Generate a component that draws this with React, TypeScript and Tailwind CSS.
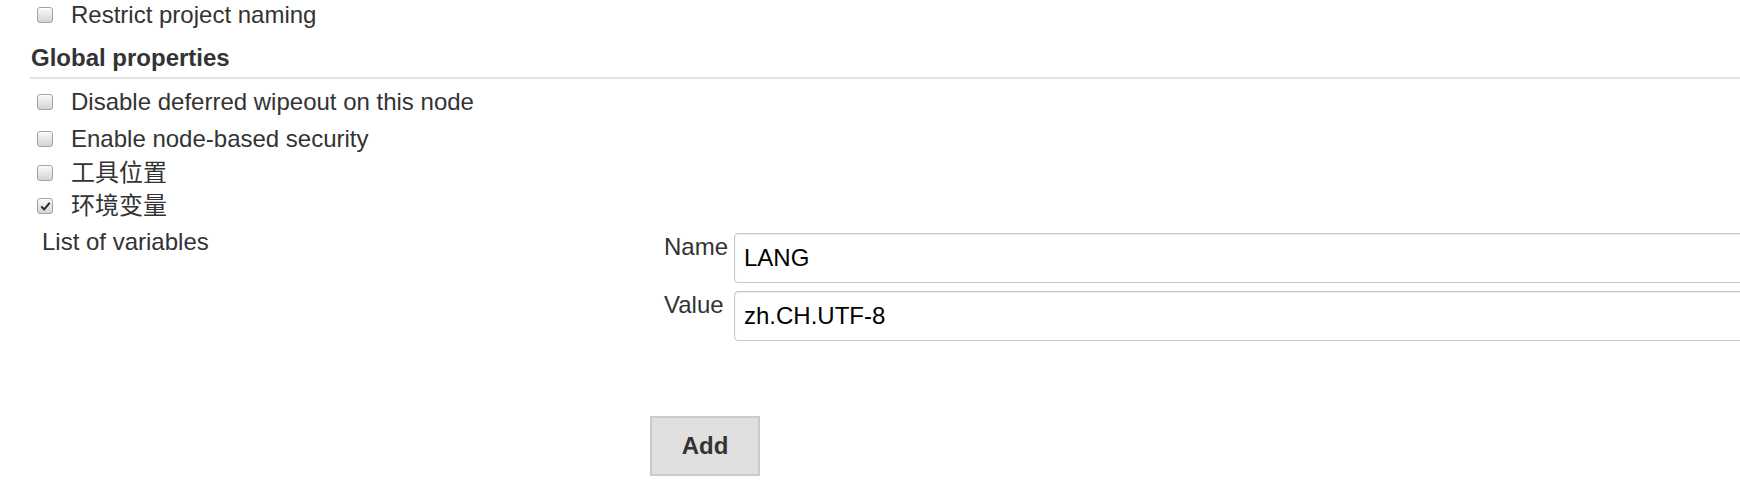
import React from "react";

const font = {
  fontFamily: '"Liberation Sans", "Noto Sans CJK SC", Arial, sans-serif',
};

function Checkbox({ checked = false }: { checked?: boolean }) {
  return (
    <span className="flex h-[16px] w-[16px] shrink-0 items-center justify-center rounded-[3px] border border-[#a4a4a4] bg-gradient-to-b from-[#fafafa] to-[#d4d4d4] shadow-[inset_0_1px_0_rgba(255,255,255,0.8)]">
      {checked && (
        <svg viewBox="0 0 12 12" className="h-[11px] w-[11px]">
          <path
            d="M2 6.5 L4.6 9.2 L10 2.6"
            fill="none"
            stroke="#2b2b2b"
            strokeWidth="2.2"
            strokeLinecap="round"
            strokeLinejoin="round"
          />
        </svg>
      )}
    </span>
  );
}

function CheckRow({
  label,
  checked,
  className = "",
}: {
  label: string;
  checked?: boolean;
  className?: string;
}) {
  return (
    <div className={`flex h-[28px] items-center gap-[18px] pl-[7px] ${className}`}>
      <Checkbox checked={checked} />
      <span className="text-[24px] leading-[28px] text-[#333333]">{label}</span>
    </div>
  );
}

function TextField({ label, value }: { label: string; value: string }) {
  return (
    <div className="flex items-start">
      <div className="w-[84px] shrink-0 pl-[14px] text-[24px] leading-[28px] text-[#333333]">
        {label}
      </div>
      <div className="flex h-[50px] w-[1100px] shrink-0 items-center rounded-[4px] border border-[#c6c6c6] bg-white pl-[9px] text-[24px] text-black shadow-[inset_0_1px_2px_rgba(0,0,0,0.08)]">
        {value}
      </div>
    </div>
  );
}

export default function App() {
  return (
    <div className="h-[500px] w-[1740px] overflow-hidden bg-white" style={font}>
      <div className="flex flex-col pl-[30px]">
        <CheckRow label="Restrict project naming" className="mt-[1px]" />

        <h3 className="mt-[15px] pl-[1px] text-[24px] font-bold leading-[28px] text-[#333333]">
          Global properties
        </h3>
        <div className="mt-[5px] h-[2px] bg-[#e2e2e2]" />

        <CheckRow label="Disable deferred wipeout on this node" className="mt-[9px]" />
        <CheckRow label="Enable node-based security" className="mt-[9px]" />
        <CheckRow label="工具位置" className="mt-[6px]" />
        <CheckRow label="环境变量" checked className="mt-[5px]" />

        <div className="mt-[8px] flex items-start pl-[12px]">
          <div className="w-[608px] shrink-0 text-[24px] leading-[28px] text-[#333333]">
            List of variables
          </div>
          <div className="mt-[5px] flex flex-col">
            <div className="flex flex-col gap-[8px]">
              <TextField label="Name" value="LANG" />
              <TextField label="Value" value="zh.CH.UTF-8" />
            </div>
            <button className="mt-[75px] h-[60px] w-[110px] border-2 border-[#cbcbcb] bg-[#e0e0e0] text-[24px] font-bold text-[#333333]">
              Add
            </button>
          </div>
        </div>
      </div>
    </div>
  );
}
